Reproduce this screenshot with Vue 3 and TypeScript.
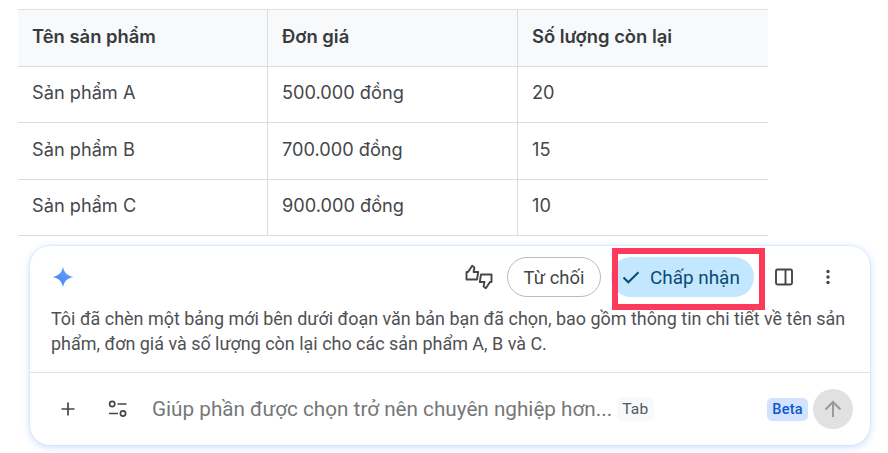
<script setup lang="ts">
const rows = [
  ['Sản phẩm A', '500.000 đồng', '20'],
  ['Sản phẩm B', '700.000 đồng', '15'],
  ['Sản phẩm C', '900.000 đồng', '10'],
]
</script>

<template>
  <div class="page">
    <div class="grid">
      <div class="cell head">Tên sản phẩm</div>
      <div class="cell head">Đơn giá</div>
      <div class="cell head last">Số lượng còn lại</div>
      <template v-for="row in rows" :key="row[0]">
        <div class="cell">{{ row[0] }}</div>
        <div class="cell">{{ row[1] }}</div>
        <div class="cell last">{{ row[2] }}</div>
      </template>
    </div>

    <section class="card">
      <div class="top">
        <svg class="spark" width="24" height="24" viewBox="0 0 24 24">
          <defs>
            <linearGradient id="sg" x1="0" y1="1" x2="1" y2="0">
              <stop offset="0" stop-color="#3f83f7" />
              <stop offset="1" stop-color="#6fa4fa" />
            </linearGradient>
          </defs>
          <path d="M12 1.5C12.9 7.5 16.5 11.1 22.5 12 16.5 12.9 12.9 16.5 12 22.5 11.1 16.5 7.5 12.9 1.5 12 7.5 11.1 11.1 7.5 12 1.5Z" fill="url(#sg)" />
        </svg>
        <div class="actions">
          <svg class="thumbs" width="28" height="26" viewBox="0 0 28 26" fill="none" stroke="#444746" stroke-width="1.9" stroke-linejoin="round">
            <path d="M1.5 8h1.5L7.2 1.8 9.4 3.4 8.6 8h4.6l-1.2 7.5H1.5z" />
            <path d="M1.5 8h1.5L7.2 1.8 9.4 3.4 8.6 8h4.6l-1.2 7.5H1.5z" transform="rotate(180 14 13)" />
          </svg>
          <button class="reject">Từ chối</button>
          <div class="accept-wrap">
            <button class="accept">
              <svg width="18" height="18" viewBox="0 0 18 18" fill="none" stroke="#0b4a73" stroke-width="2">
                <path d="M1.5 9.5l4.8 4.8L16.5 4.2" />
              </svg>
              Chấp nhận
            </button>
            <div class="highlight"></div>
          </div>
          <svg class="panel" width="20" height="20" viewBox="0 0 20 20" fill="none" stroke="#444746" stroke-width="1.9">
            <rect x="2" y="2.5" width="16" height="15" rx="1.5" />
            <path d="M11.5 2.5v15" />
          </svg>
          <svg class="more" width="4" height="16" viewBox="0 0 4 16" fill="#444746">
            <circle cx="2" cy="2.5" r="1.7" />
            <circle cx="2" cy="8" r="1.7" />
            <circle cx="2" cy="13.5" r="1.7" />
          </svg>
        </div>
      </div>
      <p class="msg">Tôi đã chèn một bảng mới bên dưới đoạn văn bản bạn đã chọn, bao gồm thông tin chi tiết về tên sản phẩm, đơn giá và số lượng còn lại cho các sản phẩm A, B và C.</p>
      <div class="bottom">
        <svg class="plus" width="14" height="14" viewBox="0 0 14 14" stroke="#444746" stroke-width="1.7">
          <path d="M7 .5v13M.5 7h13" />
        </svg>
        <svg class="tune" width="20" height="18" viewBox="0 0 20 18" fill="none" stroke="#444746" stroke-width="1.7">
          <circle cx="4.2" cy="4" r="2.6" />
          <path d="M9.5 4h9M1 13.5h9" />
          <circle cx="15" cy="13.5" r="2.6" />
        </svg>
        <span class="placeholder">Giúp phần được chọn trở nên chuyên nghiệp hơn...</span>
        <span class="tab">Tab</span>
        <span class="beta">Beta</span>
        <span class="send">
          <svg width="18" height="18" viewBox="0 0 18 18" fill="none" stroke="#9a9a9a" stroke-width="2">
            <path d="M9 17V2M1.5 9.5 9 2l7.5 7.5" />
          </svg>
        </span>
      </div>
    </section>
  </div>
</template>

<style scoped>
.page {
  width: 888px;
  height: 453px;
  overflow: hidden;
  background: #fff;
  padding: 9px 0 0 18px;
  box-sizing: border-box;
  font-family: Roboto, "Liberation Sans", sans-serif;
}
.grid {
  display: grid;
  grid-template-columns: 250px 250px 250px;
  grid-auto-rows: 56.5px;
  width: 750px;
  border-top: 1px solid #dfe1e5;
}
.cell {
  display: flex;
  align-items: center;
  padding: 0 0 4px 14px;
  box-sizing: border-box;
  border-bottom: 1px solid #dadce0;
  border-right: 1px solid #dadce0;
  font-family: Inter, sans-serif;
  font-size: 18.2px;
  color: #45474a;
}
.cell.last {
  border-right: 0;
}
.head {
  background: #f8f9fa;
  font-size: 18.4px;
  font-weight: 600;
  color: #373a3f;
}
.card {
  margin: 10px 0 0 12px;
  width: 840px;
  height: 199px;
  box-sizing: border-box;
  background: #fff;
  border-radius: 20px;
  box-shadow: 0 0 2px #bcd6fb, 0 2px 9px rgba(130, 175, 250, 0.4);
}
.top {
  display: flex;
  align-items: center;
  justify-content: space-between;
  height: 60px;
  padding: 2px 40px 0 21px;
  box-sizing: border-box;
}
.actions {
  display: flex;
  align-items: center;
}
.thumbs {
  margin-right: 14px;
}
.reject {
  width: 94px;
  height: 40px;
  border: 1px solid #b9bbbd;
  border-radius: 20px;
  background: #fff;
  font: 400 18.4px Roboto, sans-serif;
  color: #444746;
  padding: 0;
}
.accept-wrap {
  position: relative;
  margin-left: 10px;
}
.accept {
  display: flex;
  align-items: center;
  gap: 10px;
  width: 143px;
  height: 40px;
  border: 0;
  border-radius: 20px;
  background: #c2e7ff;
  font: 400 18.9px Roboto, sans-serif;
  color: #0b4a73;
  padding: 0 0 0 11px;
  box-sizing: border-box;
}
.highlight {
  position: absolute;
  left: 1px;
  top: -9px;
  width: 153px;
  height: 62px;
  box-sizing: border-box;
  border: 6px solid #fd3a5c;
}
.panel {
  margin-left: 20px;
}
.more {
  margin-left: 32px;
  margin-right: 0;
}
.msg {
  margin: 0;
  padding: 0 20px 0 21px;
  font-size: 17.95px;
  line-height: 25px;
  color: #4f5153;
}
.bottom {
  display: flex;
  align-items: center;
  height: 73px;
  margin-top: 16px;
  border-top: 1px solid #e0e3e9;
  padding-left: 31px;
  box-sizing: border-box;
}
.plus {
  flex: none;
}
.tune {
  flex: none;
  margin-left: 33px;
}
.placeholder {
  margin-left: 24px;
  font-size: 20.7px;
  color: #757779;
  white-space: nowrap;
}
.tab {
  margin-left: 5px;
  padding: 3px 5px;
  border-radius: 5px;
  background: #f8f9fa;
  font-size: 15.5px;
  letter-spacing: 0.3px;
  color: #55585a;
}
.beta {
  margin-left: auto;
  padding: 3px 5px;
  border-radius: 5px;
  background: #d3e3fd;
  font-size: 14.5px;
  font-weight: 500;
  letter-spacing: 0.3px;
  color: #0b57d0;
}
.send {
  display: flex;
  align-items: center;
  justify-content: center;
  width: 40px;
  height: 40px;
  margin: 0 17px 0 5px;
  border-radius: 50%;
  background: #e1e1e1;
}
</style>
